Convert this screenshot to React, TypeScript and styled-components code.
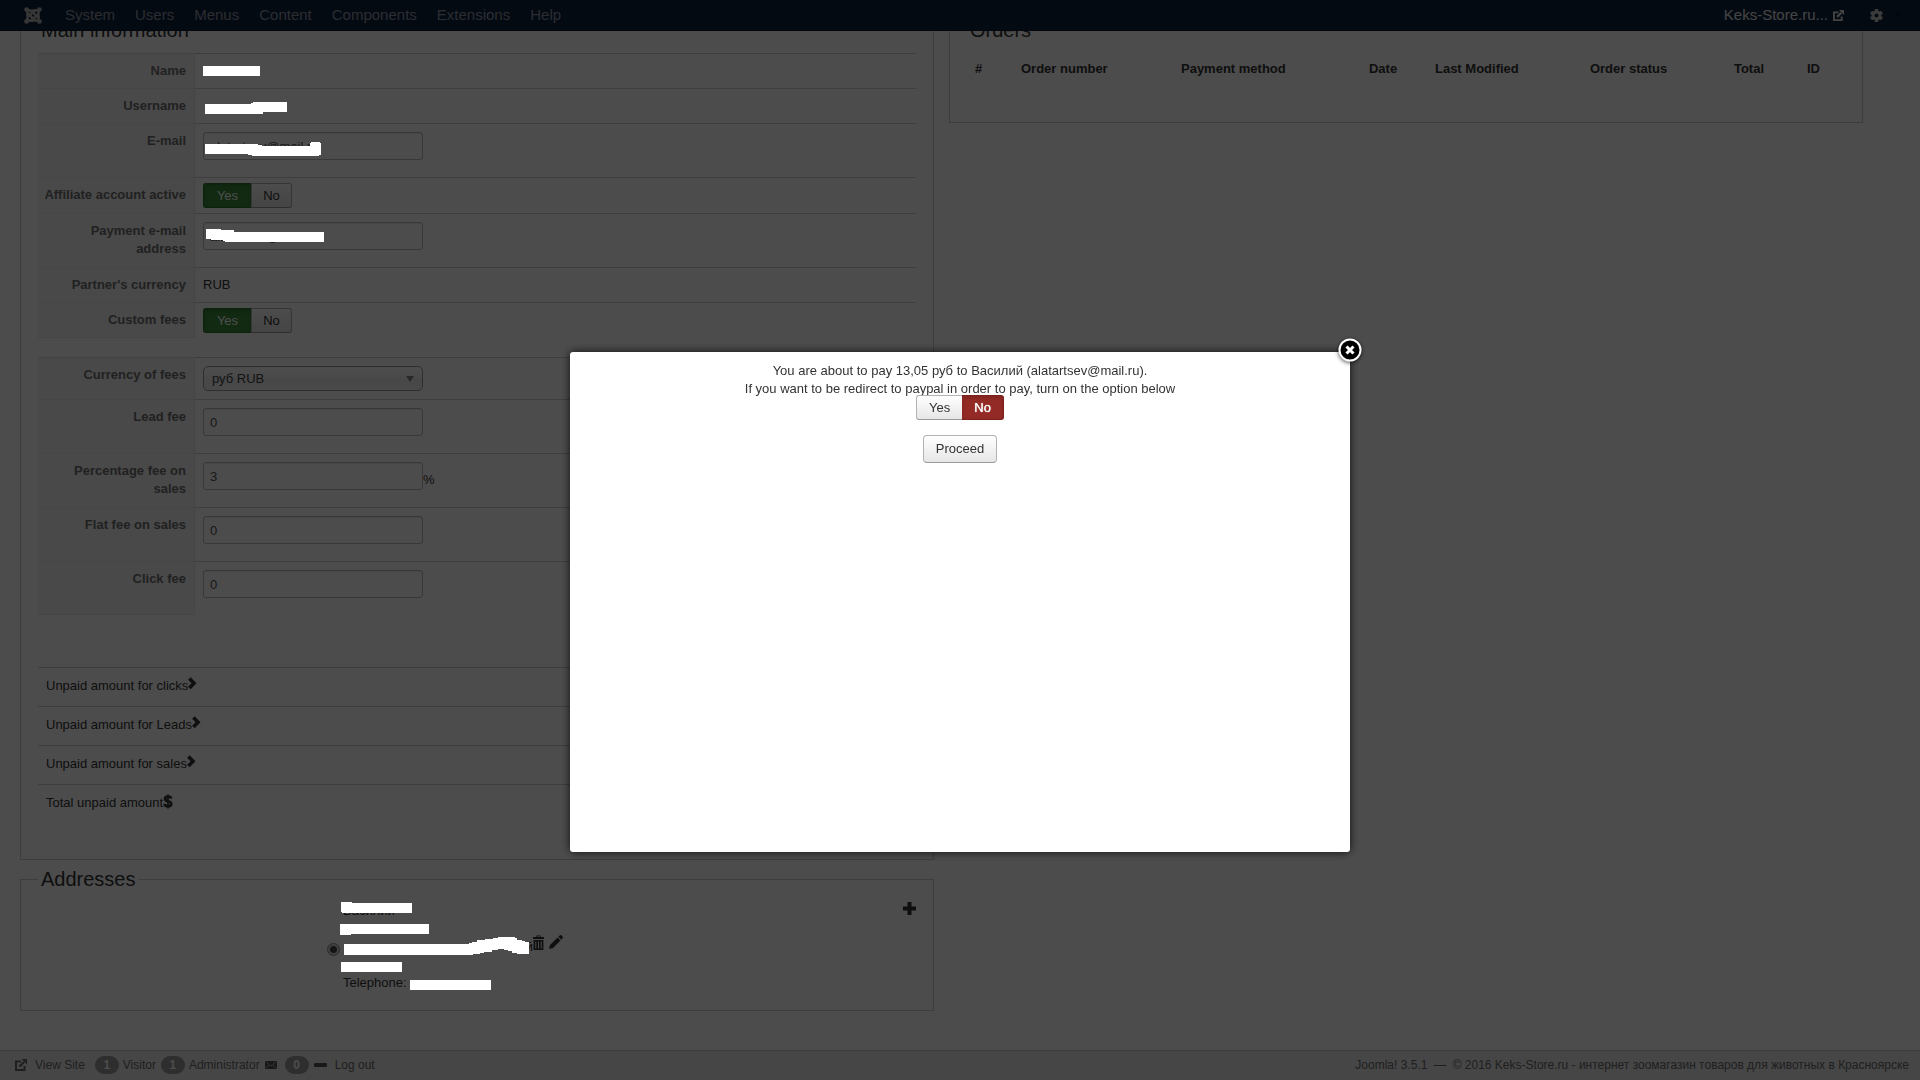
import React from "react";
import styled, { createGlobalStyle } from "styled-components";

const Global = createGlobalStyle`
  *, *::before, *::after { box-sizing: border-box; }
  body {
    margin: 0;
    background: #fff;
    color: #333;
    font: 13px/18px "Liberation Sans", Arial, sans-serif;
  }
  button, input, select { font: inherit; color: inherit; }
  a { color: inherit; text-decoration: none; }
`;

const Page = styled.div`
  min-height: 100vh;
  display: flex;
  flex-direction: column;
`;

const NavBar = styled.header`
  position: sticky;
  top: 0;
  z-index: 5;
  display: flex;
  align-items: center;
  height: 31px;
  padding: 0 18px 0 24px;
  background: #10223f;
  border-bottom: 1px solid #0d1d36;
  color: #8f96a3;
  font-size: 15px;
`;

const NavMenu = styled.nav`
  display: flex;
  gap: 20px;
  margin-left: 23px;
`;

const NavRight = styled.div`
  display: flex;
  align-items: center;
  margin-left: auto;
`;

const SiteLink = styled.a`
  display: flex;
  align-items: center;
  gap: 5px;
  color: #e4e4e4;
`;

const CogButton = styled.button`
  display: flex;
  align-items: center;
  gap: 11px;
  margin-left: 26px;
  padding: 0;
  border: 0;
  background: none;
  color: #c8c8c8;
`;

const Caret = styled.span`
  border: 4px solid transparent;
  border-top-color: #0b1628;
  border-bottom: 0;
`;

const Content = styled.main`
  flex: 1;
  display: grid;
  grid-template-columns: 1fr 1fr;
  align-items: start;
  gap: 15px;
  padding: 0 57px 36px 20px;
`;

const Column = styled.div`
  display: flex;
  flex-direction: column;
`;

const Panel = styled.section`
  border: 1px solid #ccc;
  border-top: 0;
  padding: 0 17px 36px;
`;

const PanelTitle = styled.h2`
  margin: -11px 0 0;
  padding: 0 3px;
  font-size: 20px;
  font-weight: 400;
  line-height: 20px;
`;

const Fieldset = styled.fieldset`
  margin: 9px 0 0;
  min-width: 0;
  border: 1px solid #ccc;
  padding: 0 17px 18px;
`;

const Legend = styled.legend`
  padding: 0 3px;
  font-size: 20px;
  line-height: 20px;
`;

const FormTable = styled.table<{ $gap: number }>`
  width: 100%;
  margin-top: ${(p) => p.$gap}px;
  border-collapse: separate;
  border-spacing: 0;
`;

const KeyCell = styled.th`
  width: 157px;
  padding: 8px 8px 8px 0;
  border-top: 1px solid #e9e9e9;
  border-right: 1px solid #e9e9e9;
  background: #f4f4f4;
  color: #707070;
  text-align: right;
  vertical-align: top;
  tr:first-child > & { border-top-color: #ddd; }
  tr:last-child > & { border-bottom: 1px solid #e9e9e9; }
`;

const ValueCell = styled.td<{ $tight?: boolean }>`
  padding: ${(p) => (p.$tight ? 5 : 8)}px 8px;
  border-top: 1px solid #d0d0d0;
  vertical-align: top;
`;

const Holder = styled.div`
  position: relative;
  min-height: 18px;
`;

const TextInput = styled.input`
  display: inline-block;
  vertical-align: middle;
  width: 220px;
  height: 28px;
  margin-bottom: 9px;
  padding: 4px 6px;
  border: 1px solid #bbb;
  border-radius: 3px;
  background: #fff;
  color: #555;
  box-shadow: inset 0 1px 1px rgba(0, 0, 0, 0.08);
`;

const SelectWrap = styled.div`
  position: relative;
  width: 220px;
  height: 25px;
  &::after {
    content: "";
    position: absolute;
    right: 9px;
    top: 10px;
    border: 4px solid transparent;
    border-top: 6px solid #888;
    border-bottom: 0;
  }
`;

const Select = styled.select`
  appearance: none;
  width: 100%;
  height: 25px;
  padding: 0 8px;
  border: 1px solid #999;
  border-radius: 5px;
  background: linear-gradient(#fff 20%, #f4f4f4 50%, #eee 52%, #f6f6f6);
  color: #444;
`;

const Group = styled.div`
  display: inline-flex;
  vertical-align: top;
`;

const Toggle = styled.button<{ $tone?: "yes" | "no"; $wide?: boolean }>`
  height: 25px;
  min-width: 41px;
  padding: 0 ${(p) => (p.$wide ? 12 : 11)}px;
  border: 1px solid #b3b3b3;
  border-bottom-color: #999;
  background: linear-gradient(#fff, #e6e6e6);
  color: #333;
  line-height: 18px;
  &:first-child { border-radius: 3px 0 0 3px; border-right-width: 0; }
  &:last-child { border-radius: 0 3px 3px 0; }
  ${(p) =>
    p.$tone === "yes" &&
    `min-width: 48px; background:#3c8b3c; border-color:#2f6f2f; color:#fff; box-shadow: inset 0 2px 4px rgba(0,0,0,.15);`}
  ${(p) =>
    p.$tone === "no" &&
    `background:#942a25; border-color:#7b211d; color:#fff; text-shadow:0 0 1px #fff; box-shadow: inset 0 2px 4px rgba(0,0,0,.15); border-left-width:0;`}
`;

const Proceed = styled.button`
  height: 28px;
  margin-top: 15px;
  padding: 0 12px;
  border: 1px solid #b3b3b3;
  border-bottom-color: #999;
  border-radius: 4px;
  background: linear-gradient(#fff, #e6e6e6);
  color: #333;
`;

const Totals = styled.ul`
  margin: 52px 0 0;
  padding: 0;
  list-style: none;
`;

const TotalRow = styled.li`
  display: flex;
  height: 39px;
  padding: 9px 8px;
  border-top: 1px solid #ccc;
`;

const OrdersTable = styled.table`
  width: 100%;
  margin-top: 12px;
  table-layout: fixed;
  border-collapse: collapse;
  th { padding: 8px; text-align: left; white-space: nowrap; }
`;

const AddressBody = styled.div`
  display: flex;
  padding-top: 13px;
`;

const AddressMain = styled.div`
  flex: 1;
  display: flex;
  justify-content: center;
  align-items: center;
`;

const Radio = styled.input`
  width: 13px;
  height: 13px;
  margin: 5px 3px 0 0;
  appearance: none;
  border: 1px solid #8a8a8a;
  border-radius: 50%;
  background: radial-gradient(circle, #444 0 3px, #d8d8d8 4px);
`;

const AddressText = styled.label`
  position: relative;
  width: 190px;
  min-height: 90px;
  display: flex;
  flex-direction: column;
  justify-content: space-between;
`;

const LineEnd = styled.span`
  text-align: right;
`;

const IconRow = styled.div`
  display: flex;
  gap: 5px;
  margin-bottom: 9px;
`;

const IconButton = styled.button`
  display: flex;
  padding: 0;
  border: 0;
  background: none;
`;

const AddColumn = styled.div`
  display: flex;
  justify-content: flex-end;
  align-items: flex-start;
  width: 64px;
`;

/* White marker strokes hiding private values; they sit above the dimming layer. */
const Mask = styled.svg`
  position: absolute;
  left: -4px;
  top: -4px;
  z-index: 20;
  overflow: visible;
  pointer-events: none;
  fill: #fff;
`;

const Footer = styled.footer`
  display: flex;
  align-items: center;
  height: 30px;
  padding: 0 11px 2px 15px;
  border-top: 1px solid #ccc;
  background: #ebebeb;
  color: #6a6a6a;
  font-size: 12px;
`;

const FooterItem = styled.span<{ $gap: number; $after?: number }>`
  display: flex;
  align-items: center;
  gap: ${(p) => p.$gap}px;
  margin-right: ${(p) => p.$after ?? 5}px;
`;

const Badge = styled.span`
  width: 24px;
  height: 18px;
  border-radius: 9px;
  background: #999;
  color: #fff;
  font-weight: 700;
  text-align: center;
`;

const Copyright = styled.span`
  margin-left: auto;
  white-space: pre;
`;

const Overlay = styled.div`
  position: fixed;
  inset: 0;
  z-index: 10;
  display: flex;
  justify-content: center;
  align-items: flex-start;
  padding-top: 352px;
  background: rgba(0, 0, 0, 0.7);
`;

const Dialog = styled.div`
  position: relative;
  width: 780px;
  height: 500px;
  padding-top: 10px;
  border-radius: 3px;
  background: #fff;
  box-shadow: 0 0 10px rgba(0, 0, 0, 0.8);
  text-align: center;
  p { margin: 0; }
`;

const DialogActions = styled.div`
  display: flex;
  flex-direction: column;
  align-items: center;
  margin-top: -3px;
`;

const CloseButton = styled.button`
  position: absolute;
  top: -15px;
  right: -13px;
  display: flex;
  padding: 0;
  border: 0;
  background: none;
  filter: drop-shadow(0 1px 2px rgba(0, 0, 0, 0.7));
`;

const External = ({ size = 12 }: { size?: number }) => (
  <svg width={size} height={size} viewBox="0 0 12 12" fill="none" stroke="currentColor" strokeWidth="2" aria-hidden="true">
    <path d="M6 2.500H1V11h8.500V7" />
    <path d="M4.500 7.500L9 3" strokeWidth="2.400" />
    <path d="M6.500 0H12v5.500z" fill="currentColor" stroke="none" />
  </svg>
);

const JoomlaMark = () => (
  <svg width="18" height="17" viewBox="0 0 18 17" fill="none" stroke="#b4b4b4" aria-hidden="true">
    <g strokeWidth="2.600" strokeLinecap="round" strokeLinejoin="round">
      <path d="M3.400 8V5.600Q3.400 3.400 5.600 3.400Q7 3.400 8 4.600L13.600 10.200" />
      <path d="M8.200 3.800Q10 3 12 3.400Q14.600 3.400 14.600 6Q14.600 7.400 13 8.600L7.600 13" />
      <path d="M14.600 9V11.400Q14.600 13.600 12.400 13.600Q11 13.600 10 12.400L4.400 6.800" />
      <path d="M9.800 13.200Q8 14 6 13.600Q3.400 13.600 3.400 11Q3.400 9.600 5 8.400L10.400 4" />
    </g>
    <g fill="#b4b4b4" stroke="none">
      <circle cx="2.600" cy="2.600" r="2.400" /><circle cx="15.400" cy="2.600" r="2.400" />
      <circle cx="2.600" cy="14.400" r="2.400" /><circle cx="15.400" cy="14.400" r="2.400" />
    </g>
  </svg>
);

const Cog = () => (
  <svg width="13" height="13" viewBox="0 0 14 14" aria-hidden="true">
    <g fill="currentColor">
      {[0, 60, 120].map((a) => (
        <rect key={a} x="5" y="0" width="4" height="14" rx="1" transform={`rotate(${a} 7 7)`} />
      ))}
      <circle cx="7" cy="7" r="5.200" />
    </g>
    <circle cx="7" cy="7" r="2.200" fill="#10223f" />
  </svg>
);

const Chevron = () => (
  <svg width="9" height="13" viewBox="0 0 9 13" fill="none" stroke="#333" strokeWidth="3.600" aria-hidden="true">
    <path d="M1.400 1.600L6 6.300L1.400 11" />
  </svg>
);

const Dollar = () => (
  <svg width="10" height="15" viewBox="0 0 10 15" fill="none" stroke="#333" aria-hidden="true">
    <path d="M8.200 4.600Q7.800 2.600 5 2.600Q2 2.600 2 4.800Q2 6.600 5 7.200Q8.200 7.900 8.200 9.900Q8.200 12.200 5 12.200Q1.800 12.200 1.600 9.800" strokeWidth="2.700" />
    <path d="M5 .5V14.500" strokeWidth="1.600" />
  </svg>
);

const Trash = () => (
  <svg width="11" height="15" viewBox="0 0 11 15" fill="#333" aria-hidden="true">
    <path d="M3.400 2V.4h4.200V2H11v2H0V2zM4.400 1.300V2h2.200v-.7z" />
    <path fillRule="evenodd" d="M.6 5h9.800v10H.6zM2.300 6.400v7h1v-7zM5 6.400v7h1v-7zM7.700 6.400v7h1v-7z" />
  </svg>
);

const Pencil = () => (
  <svg width="14" height="14" viewBox="0 0 14 14" fill="#333" aria-hidden="true">
    <path d="M0 14l1-4L8.500 2.600l3 3L4 13z M9.400 1.700L11 .2q1-.5 2 .5t.7 2.200L12.400 4.700z" />
  </svg>
);

const Plus = () => (
  <svg width="13" height="13" viewBox="0 0 13 13" fill="#333" aria-hidden="true">
    <path d="M4.500 0h4v4.500H13v4H8.500V13h-4V8.500H0v-4h4.500z" />
  </svg>
);

const Envelope = () => (
  <svg width="12" height="8" viewBox="0 0 12 8" aria-hidden="true">
    <path fill="#555" d="M0 0h12v8H0z" />
    <path fill="none" stroke="#ddd" d="M.5 .5L6 5L11.500 .5M.5 7.500L4 4M11.500 7.500L8 4" strokeWidth=".6" />
  </svg>
);

const CloseIcon = () => (
  <svg width="26" height="26" viewBox="0 0 26 26" aria-hidden="true">
    <circle cx="13" cy="13" r="10.500" fill="#000" stroke="#fff" strokeWidth="2" />
    <path d="M9.500 9.500l7 7M16.500 9.500l-7 7" stroke="#fff" strokeWidth="3" />
  </svg>
);

const MENU = ["System", "Users", "Menus", "Content", "Components", "Extensions", "Help"];

const ORDER_COLUMNS: [string, number][] = [
  ["#", 46], ["Order number", 160], ["Payment method", 188], ["Date", 66],
  ["Last Modified", 155], ["Order status", 144], ["Total", 73], ["ID", 46],
];

const YesNo = ({ label }: { label: string }) => (
  <Group role="group" aria-label={label}>
    <Toggle type="button" $tone="yes" $wide aria-pressed="true">Yes</Toggle>
    <Toggle type="button" aria-pressed="false">No</Toggle>
  </Group>
);

const FeeRow = ({ id, label, value, unit }: { id: string; label: string; value: string; unit?: string }) => (
  <tr>
    <KeyCell scope="row"><label htmlFor={id}>{label}</label></KeyCell>
    <ValueCell><TextInput id={id} defaultValue={value} />{unit}</ValueCell>
  </tr>
);

export default function App() {
  return (
    <Page>
      <Global />
      <NavBar>
        <JoomlaMark />
        <NavMenu>
          {MENU.map((m) => <a href="#" key={m}>{m}</a>)}
        </NavMenu>
        <NavRight>
          <SiteLink href="#">Keks-Store.ru... <External size={11} /></SiteLink>
          <CogButton type="button" aria-label="Settings"><Cog /><Caret /></CogButton>
        </NavRight>
      </NavBar>

      <Content>
        <Column>
          <Panel>
            <PanelTitle>Main information</PanelTitle>
            <FormTable $gap={13}>
              <tbody>
                <tr>
                  <KeyCell scope="row">Name</KeyCell>
                  <ValueCell>
                    <Holder>
                      <Mask width="70" height="20"><path d="M4 8h57v10H4z" /></Mask>
                    </Holder>
                  </ValueCell>
                </tr>
                <tr>
                  <KeyCell scope="row">Username</KeyCell>
                  <ValueCell>
                    <Holder>
                      <Mask width="100" height="20"><path d="M6 11h46v-1h2v-1h34v10H64v2H6z" /></Mask>
                    </Holder>
                  </ValueCell>
                </tr>
                <tr>
                  <KeyCell scope="row"><label htmlFor="email">E-mail</label></KeyCell>
                  <ValueCell>
                    <Holder>
                      <TextInput id="email" defaultValue="alatartsev@mail.ru" />
                      <Mask width="130" height="30"><path d="M6 16h53v1h4v1h48v-3h1v-1h9v1h1v12h-2v1H53v-1h-4v-1H6z" /></Mask>
                    </Holder>
                  </ValueCell>
                </tr>
                <tr>
                  <KeyCell scope="row">Affiliate account active</KeyCell>
                  <ValueCell $tight><YesNo label="Affiliate account active" /></ValueCell>
                </tr>
                <tr>
                  <KeyCell scope="row"><label htmlFor="payEmail">Payment e-mail address</label></KeyCell>
                  <ValueCell>
                    <Holder>
                      <TextInput id="payEmail" defaultValue="alatartsev@mail.ru" />
                      <Mask width="130" height="30"><path d="M7 11h15v1h13v2h90v10H26v-1h-2v-1H12v-1H7z" /></Mask>
                    </Holder>
                  </ValueCell>
                </tr>
                <tr>
                  <KeyCell scope="row">Partner's currency</KeyCell>
                  <ValueCell>RUB</ValueCell>
                </tr>
                <tr>
                  <KeyCell scope="row">Custom fees</KeyCell>
                  <ValueCell $tight><YesNo label="Custom fees" /></ValueCell>
                </tr>
              </tbody>
            </FormTable>

            <FormTable $gap={19}>
              <tbody>
                <tr>
                  <KeyCell scope="row"><label htmlFor="currency">Currency of fees</label></KeyCell>
                  <ValueCell>
                    <SelectWrap>
                      <Select id="currency"><option>руб RUB</option></Select>
                    </SelectWrap>
                  </ValueCell>
                </tr>
                <FeeRow id="lead" label="Lead fee" value="0" />
                <FeeRow id="percent" label="Percentage fee on sales" value="3" unit="%" />
                <FeeRow id="flat" label="Flat fee on sales" value="0" />
                <FeeRow id="click" label="Click fee" value="0" />
              </tbody>
            </FormTable>

            <Totals>
              <TotalRow>Unpaid amount for clicks<Chevron /></TotalRow>
              <TotalRow>Unpaid amount for Leads<Chevron /></TotalRow>
              <TotalRow>Unpaid amount for sales<Chevron /></TotalRow>
              <TotalRow>Total unpaid amount<Dollar /></TotalRow>
            </Totals>
          </Panel>

          <Fieldset>
            <Legend>Addresses</Legend>
            <AddressBody>
              <AddressMain>
                <Radio type="radio" id="address" name="address" defaultChecked />
                <AddressText htmlFor="address">
                  <span>Василий</span>
                  <LineEnd>й</LineEnd>
                  <span>Telephone:</span>
                  <Mask width="200" height="100">
                    <path d="M2 4h11v1h60v10H3v-1H2z" />
                    <path d="M1 26h89v10H12v1H1z" />
                    <path d="M5 46h125v-1h3v-1h5v-2h8v-1h8v-1h5v-1h17v1h2v2h5v1h3v1h4v12h-12v-1h-5v-2h-4v-1h-4v-1h-6v1h-6v2h-8v1h-4v1h-7v1H5z" />
                    <path d="M2 64h61v10H2z" />
                    <path d="M71 82h81v10H71z" />
                  </Mask>
                </AddressText>
                <IconRow>
                  <IconButton type="button" aria-label="Delete"><Trash /></IconButton>
                  <IconButton type="button" aria-label="Edit"><Pencil /></IconButton>
                </IconRow>
              </AddressMain>
              <AddColumn>
                <IconButton type="button" aria-label="Add"><Plus /></IconButton>
              </AddColumn>
            </AddressBody>
          </Fieldset>
        </Column>

        <Panel>
          <PanelTitle>Orders</PanelTitle>
          <OrdersTable>
            <colgroup>
              {ORDER_COLUMNS.map(([name, w]) => <col key={name} style={{ width: `${(w / 878) * 100}%` }} />)}
            </colgroup>
            <thead>
              <tr>{ORDER_COLUMNS.map(([name]) => <th scope="col" key={name}>{name}</th>)}</tr>
            </thead>
          </OrdersTable>
        </Panel>
      </Content>

      <Footer>
        <FooterItem $gap={8} $after={10}><External /><a href="#">View Site</a></FooterItem>
        <FooterItem $gap={4}><Badge>1</Badge>Visitor</FooterItem>
        <FooterItem $gap={4}><Badge>1</Badge>Administrator</FooterItem>
        <FooterItem $gap={8}><Envelope /><Badge>0</Badge></FooterItem>
        <FooterItem $gap={8}>
          <svg width="13" height="4" aria-hidden="true"><rect width="13" height="4" rx="1" fill="#555" /></svg>
          <a href="#">Log out</a>
        </FooterItem>
        <Copyright>{"Joomla! 3.5.1  —  © 2016 Keks-Store.ru - интернет зоомагазин товаров для животных в Красноярске"}</Copyright>
      </Footer>

      <Overlay>
        <Dialog role="dialog" aria-modal="true" aria-label="Payment">
          <p>You are about to pay 13,05 руб to Василий (alatartsev@mail.ru).</p>
          <p>If you want to be redirect to paypal in order to pay, turn on the option below</p>
          <DialogActions>
            <Group role="group" aria-label="Redirect to paypal">
              <Toggle type="button" $wide aria-pressed="false">Yes</Toggle>
              <Toggle type="button" $tone="no" $wide aria-pressed="true">No</Toggle>
            </Group>
            <Proceed type="button">Proceed</Proceed>
          </DialogActions>
          <CloseButton type="button" aria-label="Close"><CloseIcon /></CloseButton>
        </Dialog>
      </Overlay>
    </Page>
  );
}
